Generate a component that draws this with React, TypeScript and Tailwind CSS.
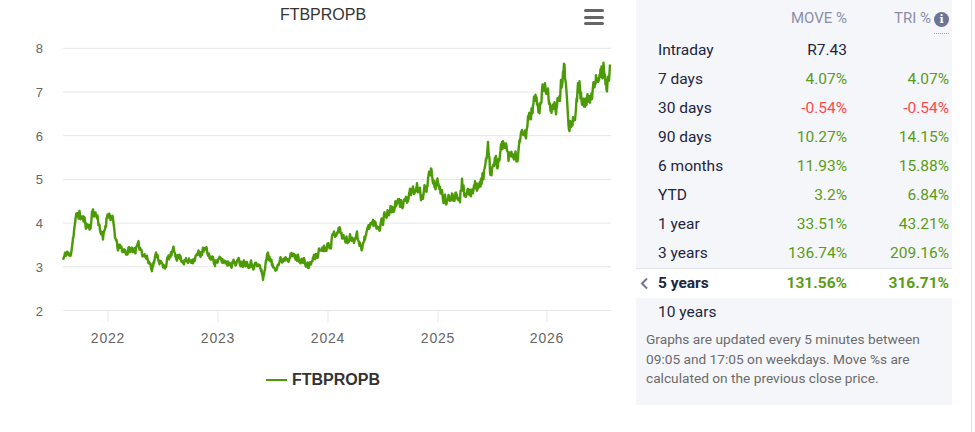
import { useMemo } from 'react';

// anchor points read off the reference: [x pixel, value]
const ANCHORS: [number, number][] = [
  [63, 3.16], [67, 3.34], [70, 3.2], [75, 4.0], [78, 4.23], [84, 4.05], [90, 3.9], [93, 4.3],
  [98, 4.1], [103, 3.6], [108, 4.3], [113, 4.0], [117, 3.45], [127, 3.35], [140, 3.45],
  [152, 3.0], [157, 3.3], [163, 2.97], [173, 3.34], [187, 3.1], [205, 3.38], [213, 3.15],
  [233, 3.1], [247, 3.12], [260, 3.0], [263, 2.75], [268, 3.34], [273, 2.97], [287, 3.27],
  [300, 3.2], [308, 3.0], [320, 3.38], [330, 3.55], [338, 3.9], [345, 3.6], [357, 3.72],
  [362, 3.43], [370, 4.0], [380, 3.95], [385, 4.2], [400, 4.45], [410, 4.6], [418, 4.83],
  [422, 4.53], [430, 5.17], [435, 4.92], [447, 4.46], [452, 4.68], [460, 4.64], [462, 4.99],
  [466, 4.53], [475, 4.92], [480, 4.83], [485, 5.28], [488, 5.67], [490, 5.15], [498, 5.44],
  [504, 5.86], [508, 5.44], [518, 5.56], [522, 5.97], [526, 6.02], [528, 6.36], [533, 6.66],
  [535, 6.82], [540, 6.59], [543, 7.16], [546, 6.98], [548, 7.16], [551, 6.59], [553, 6.47],
  [557, 6.7], [560, 6.98], [564, 7.53], [567, 7.05], [569, 6.31], [575, 6.4], [578, 6.98],
  [580, 7.16], [583, 6.66], [590, 6.77], [595, 7.09], [598, 7.39], [602, 7.55], [604, 7.69],
  [607, 7.11], [610, 7.43],
];

const yOf = (v: number) => 48.3 + (8 - v) * 43.7;

function rng(seed: number) {
  return () => {
    seed = (seed + 0x6d2b79f5) | 0;
    let t = Math.imul(seed ^ (seed >>> 15), 1 | seed);
    t = (t + Math.imul(t ^ (t >>> 7), 61 | t)) ^ t;
    return ((t ^ (t >>> 14)) >>> 0) / 4294967296;
  };
}

function buildPath() {
  const rand = rng(11);
  let n = 0;
  let i = 0;
  const out: string[] = [];
  for (let x = 63; x <= 610; x += 0.5) {
    while (i < ANCHORS.length - 2 && ANCHORS[i + 1][0] < x) i++;
    const [x0, v0] = ANCHORS[i];
    const [x1, v1] = ANCHORS[i + 1];
    const t = Math.min(1, Math.max(0, (x - x0) / (x1 - x0)));
    const v = v0 + (v1 - v0) * t;
    // short-memory noise so the line stays jagged like daily prices
    n = n * 0.55 + (rand() - 0.5) * 0.05;
    out.push(`${out.length ? 'L' : 'M'}${x.toFixed(1)},${yOf(v * (1 + n)).toFixed(1)}`);
  }
  return out.join(' ');
}

const YEARS = [
  { label: '2022', x: 108 },
  { label: '2023', x: 218 },
  { label: '2024', x: 328 },
  { label: '2025', x: 438 },
  { label: '2026', x: 547 },
];

interface Row {
  label: string;
  move?: string;
  tri?: string;
  neg?: boolean;
}

const ROWS: Row[] = [
  { label: '7 days', move: '4.07%', tri: '4.07%' },
  { label: '30 days', move: '-0.54%', tri: '-0.54%', neg: true },
  { label: '90 days', move: '10.27%', tri: '14.15%' },
  { label: '6 months', move: '11.93%', tri: '15.88%' },
  { label: 'YTD', move: '3.2%', tri: '6.84%' },
  { label: '1 year', move: '33.51%', tri: '43.21%' },
  { label: '3 years', move: '136.74%', tri: '209.16%' },
];

function Chart() {
  const path = useMemo(buildPath, []);

  return (
    <div className="w-[636px] shrink-0 flex flex-col font-['Liberation_Sans',Arial,sans-serif]">
      <div className="relative h-[34px] flex items-start justify-center pt-[6px] pl-[10px]">
        <span className="text-[16px] leading-[18px] text-[#333333]">FTBPROPB</span>
        <div className="absolute left-[584px] top-[9px] flex flex-col gap-[3.5px]">
          <span className="block w-[20px] h-[3px] rounded-full bg-[#666666]" />
          <span className="block w-[20px] h-[3px] rounded-full bg-[#666666]" />
          <span className="block w-[20px] h-[3px] rounded-full bg-[#666666]" />
        </div>
      </div>

      <svg width={636} height={316} viewBox="0 34 636 316" className="block">
        {[8, 7, 6, 5, 4, 3, 2].map(v => (
          <g key={v}>
            <line x1={63} x2={611} y1={yOf(v)} y2={yOf(v)} stroke="#e6e6e6" strokeWidth={1} />
            <text x={43} y={yOf(v) + 5} textAnchor="end" fontSize={13} fill="#666666">
              {v}
            </text>
          </g>
        ))}
        {YEARS.map(y => (
          <g key={y.label}>
            <line x1={y.x} x2={y.x} y1={yOf(2)} y2={yOf(2) + 11} stroke="#e6e6e6" strokeWidth={1} />
            <text
              x={y.x}
              y={343}
              textAnchor="middle"
              fontSize={14}
              letterSpacing={0.8}
              fill="#666666"
            >
              {y.label}
            </text>
          </g>
        ))}
        <path d={path} fill="none" stroke="#4b9a06" strokeWidth={2.4} strokeLinejoin="round" />
      </svg>

      <div className="mt-[21px] flex items-center justify-center gap-[5px] pl-[10px]">
        <span className="block w-[21px] h-[2.5px] bg-[#4b9a06]" />
        <span className="text-[16px] leading-[18px] font-bold text-[#333333]">FTBPROPB</span>
      </div>
    </div>
  );
}

function PerfPanel() {
  return (
    <div className="w-[316px] h-[405px] shrink-0 bg-[#f5f6fa] flex flex-col font-['Roboto',sans-serif]">
      <div className="h-[36px] grid grid-cols-[22px_1fr_100px_102px] pr-[3px] items-center text-[15px] text-[#8a8fa8]">
        <span />
        <span />
        <span className="text-right">MOVE %</span>
        <span className="flex items-center justify-end gap-[3px]">
          TRI %
          <span className="relative flex items-center justify-center w-[15px] h-[15px] rounded-full bg-[#6e7494] text-white text-[11px] font-bold leading-none mt-[2px] font-['DejaVu_Serif',serif]">
            i
            <span className="absolute left-0 right-0 -bottom-[7px] border-b border-dotted border-[#9aa0b4]" />
          </span>
        </span>
      </div>

      <div className="h-[29px] grid grid-cols-[22px_1fr_100px_102px] pr-[3px] items-center text-[15.5px]">
        <span />
        <span className="text-[#1d2540]">Intraday</span>
        <span className="text-right text-[#1d2540]">R7.43</span>
        <span />
      </div>

      {ROWS.map(r => (
        <div
          key={r.label}
          className="h-[29px] grid grid-cols-[22px_1fr_100px_102px] pr-[3px] items-center text-[15.5px]"
        >
          <span />
          <span className="text-[#1d2540]">{r.label}</span>
          <span className={`text-right ${r.neg ? 'text-[#ff4a4a]' : 'text-[#5a9c17]'}`}>{r.move}</span>
          <span className={`text-right ${r.neg ? 'text-[#ff4a4a]' : 'text-[#5a9c17]'}`}>{r.tri}</span>
        </div>
      ))}

      <div className="h-[30px] grid grid-cols-[22px_1fr_100px_102px] pr-[3px] items-center text-[15.5px] font-bold bg-white border-t border-[#e3e5eb]">
        <span className="flex pl-[4px]">
          <svg width="9" height="13" viewBox="0 0 9 13">
            <path d="M7 1.5 L2 6.5 L7 11.5" fill="none" stroke="#6e7494" strokeWidth={2} />
          </svg>
        </span>
        <span className="text-[#1d2540]">5 years</span>
        <span className="text-right text-[#5a9c17]">131.56%</span>
        <span className="text-right text-[#5a9c17]">316.71%</span>
      </div>

      <div className="h-[30px] flex items-center pl-[22px] text-[15.5px] text-[#1d2540]">10 years</div>

      <p className="mt-[2px] pl-[10px] text-[13.7px] leading-[19.5px] text-[#6b6b6b] whitespace-nowrap">
        Graphs are updated every 5 minutes between
        <br />
        09:05 and 17:05 on weekdays. Move %s are
        <br />
        calculated on the previous close price.
      </p>
    </div>
  );
}

export default function App() {
  return (
    <div className="flex w-[975px] h-[432px] bg-white overflow-hidden">
      <Chart />
      <PerfPanel />
      <div className="ml-[19px] w-px h-full bg-[#e3e3e3]" />
    </div>
  );
}
